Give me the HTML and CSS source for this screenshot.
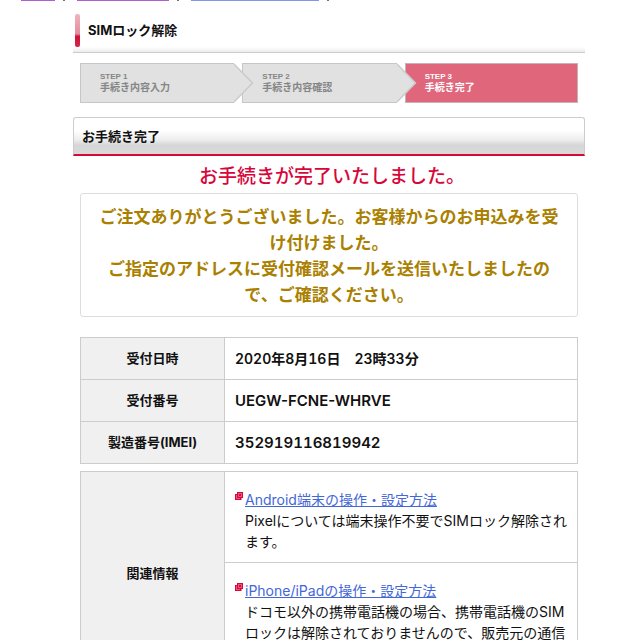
FILE: index.html
```html
<!DOCTYPE html>
<html lang="ja">
<head>
<meta charset="utf-8">
<title>SIMロック解除</title>
<link rel="stylesheet" href="styles.css">
</head>
<body>
<div class="trail" aria-hidden="true">
  <span class="trail-link trail-short"></span><span class="trail-sep"></span>
  <span class="trail-link trail-mid"></span><span class="trail-sep"></span>
  <span class="trail-link trail-new"></span><span class="trail-sep"></span>
</div>
<main class="page">
  <h1 class="title">SIMロック解除</h1>
  <ol class="steps">
    <li class="step"><span class="step-no">STEP 1</span><span class="step-name">手続き内容入力</span>
      <svg class="arrow" width="20" height="40" viewBox="0 0 20 40" aria-hidden="true"><path d="M0 0H8V40H0Z" fill="#fff"/><path d="M0 1L18.5 20L0 39" fill="#e1e1e1" stroke="#cacaca" stroke-width="1.5"/></svg>
    </li>
    <li class="step"><span class="step-no">STEP 2</span><span class="step-name">手続き内容確認</span>
      <svg class="arrow" width="20" height="40" viewBox="0 0 20 40" aria-hidden="true"><path d="M0 0H8V40H0Z" fill="#fff"/><path d="M0 1L18.5 20L0 39" fill="#e1e1e1" stroke="#cacaca" stroke-width="1.5"/></svg>
    </li>
    <li class="step current" aria-current="step"><span class="step-no">STEP 3</span><span class="step-name">手続き完了</span></li>
  </ol>
  <h2 class="section">お手続き完了</h2>
  <div class="content">
    <p class="done">お手続きが完了いたしました。</p>
    <p class="notice">ご注文ありがとうございました。お客様からのお申込みを受け付けました。<br>ご指定のアドレスに受付確認メールを送信いたしましたので、ご確認ください。</p>
    <table class="info">
      <tr><th scope="row">受付日時</th><td class="digits">2020年8月16日　23時33分</td></tr>
      <tr><th scope="row">受付番号</th><td class="code">UEGW-FCNE-WHRVE</td></tr>
      <tr><th scope="row">製造番号(IMEI)</th><td class="code digits">352919116819942</td></tr>
    </table>
    <table class="info related">
      <tr>
        <th scope="rowgroup" rowspan="2">関連情報</th>
        <td><div class="item">
          <svg class="window" width="8" height="8" viewBox="0 0 8 8" aria-hidden="true"><path d="M2 0H8V6H6.500V8H0V2H2Z" fill="#d7063b"/><path d="M3.500 1.500H6.500V4.500H3.500ZM1.500 3V6.500H5" fill="none" stroke="#f5b5c5" stroke-width=".5"/></svg>
          <div><a href="#android">Android端末の操作・設定方法</a><p>Pixelについては端末操作不要でSIMロック解除されます。</p></div>
        </div></td>
      </tr>
      <tr>
        <td><div class="item">
          <svg class="window" width="8" height="8" viewBox="0 0 8 8" aria-hidden="true"><path d="M2 0H8V6H6.500V8H0V2H2Z" fill="#d7063b"/><path d="M3.500 1.500H6.500V4.500H3.500ZM1.500 3V6.500H5" fill="none" stroke="#f5b5c5" stroke-width=".5"/></svg>
          <div><a href="#iphone">iPhone/iPadの操作・設定方法</a><p>ドコモ以外の携帯電話機の場合、携帯電話機のSIMロックは解除されておりませんので、販売元の通信</p></div>
        </div></td>
      </tr>
    </table>
  </div>
</main>
</body>
</html>
```
FILE: styles.css
```css
* {
  box-sizing: border-box;
}

body {
  margin: 0;
  background: #fff;
  color: #111;
  font-family: Inter, "Noto Sans CJK JP", sans-serif;
  font-size: 14px;
  line-height: 21px;
}

h1, h2, p, ol {
  margin: 0;
}

.trail {
  display: flex;
  height: 1px;
  padding-left: 21px;
}

.trail-link {
  background: #b05fd3;
}

.trail-short {
  width: 34px;
}

.trail-mid {
  width: 92px;
}

.trail-new {
  width: 128px;
  background: #8496e6;
}

.trail-sep {
  width: 2px;
  margin: 0 12px 0 8px;
  background: #777;
}

.page {
  padding: 13px 55px 20px 73px;
}

.title {
  display: flex;
  align-items: center;
  height: 39px;
  padding: 0 2px 5px;
  border-bottom: 1px solid #ccc;
  background: linear-gradient(#fff, #ececec) bottom / 100% 5px no-repeat;
  font-size: 13px;
}

.title::before {
  content: "";
  width: 5px;
  height: 33px;
  margin-right: 8px;
  border-radius: 2px;
  background: linear-gradient(#f0b4be, #e58c9c 60%, #cf1236 68%, #d7264a);
}

.steps {
  display: grid;
  grid-template-columns: 162fr 162fr 173fr;
  margin: 10px 7px 14px;
  padding: 0;
  list-style: none;
}

.step {
  display: flex;
  flex-direction: column;
  justify-content: center;
  position: relative;
  height: 40px;
  padding: 0 0 2px 19px;
  border: 1px solid #c6c6c6;
  border-right: 0;
  background: #e1e1e1;
  color: #858585;
  font-size: 10px;
  font-weight: 700;
  line-height: 11px;
}

.step-no {
  font-family: "Liberation Sans", sans-serif;
  font-size: 8px;
}

.current {
  border: 1px solid #c4b4b7;
  background: #e0667b;
  color: #fff;
}

.arrow {
  position: absolute;
  top: -1px;
  right: -12px;
  z-index: 1;
}

.section {
  padding: 8px 8px 7px;
  border: 1px solid #ccc;
  border-bottom: 2px solid #d20a35;
  border-radius: 3px 3px 0 0;
  background: linear-gradient(#fff 35%, #eee 60%, #d6d6d6 75%, #d9d9d9);
  font-size: 13px;
}

.content {
  padding: 0 7px;
}

.done {
  padding: 8px 0 3px 6px;
  color: #d7063b;
  font-size: 19px;
  font-weight: 500;
  line-height: 26px;
  text-align: center;
}

.notice {
  margin-bottom: 20px;
  padding: 10px 16px 8px;
  border: 1px solid #ddd;
  border-radius: 3px;
  color: #aa8000;
  font-size: 17px;
  font-weight: 700;
  line-height: 26px;
  text-align: center;
}

.info {
  width: 100%;
  margin-bottom: 7px;
  border: 1px solid #d8d8d8;
  border-collapse: collapse;
}

.info th {
  width: 144px;
  padding: 10px 0;
  border: 1px solid #ccc;
  background: #f0f0f0;
  font-size: 13px;
}

.info td {
  padding: 10px;
  border: 1px solid #ccc;
  font-weight: 600;
}

.info .code {
  font-size: 15px;
}

.info .digits {
  font-variant-numeric: tabular-nums;
}

.info.related td {
  padding: 17px 5px 10px 10px;
  font-weight: 400;
}

.info.related tr:last-child td {
  padding-bottom: 32px;
}

.item {
  display: flex;
  gap: 2px;
}

.window {
  flex: none;
  margin-top: 3px;
}

.item a {
  color: #4467d8;
}
```
